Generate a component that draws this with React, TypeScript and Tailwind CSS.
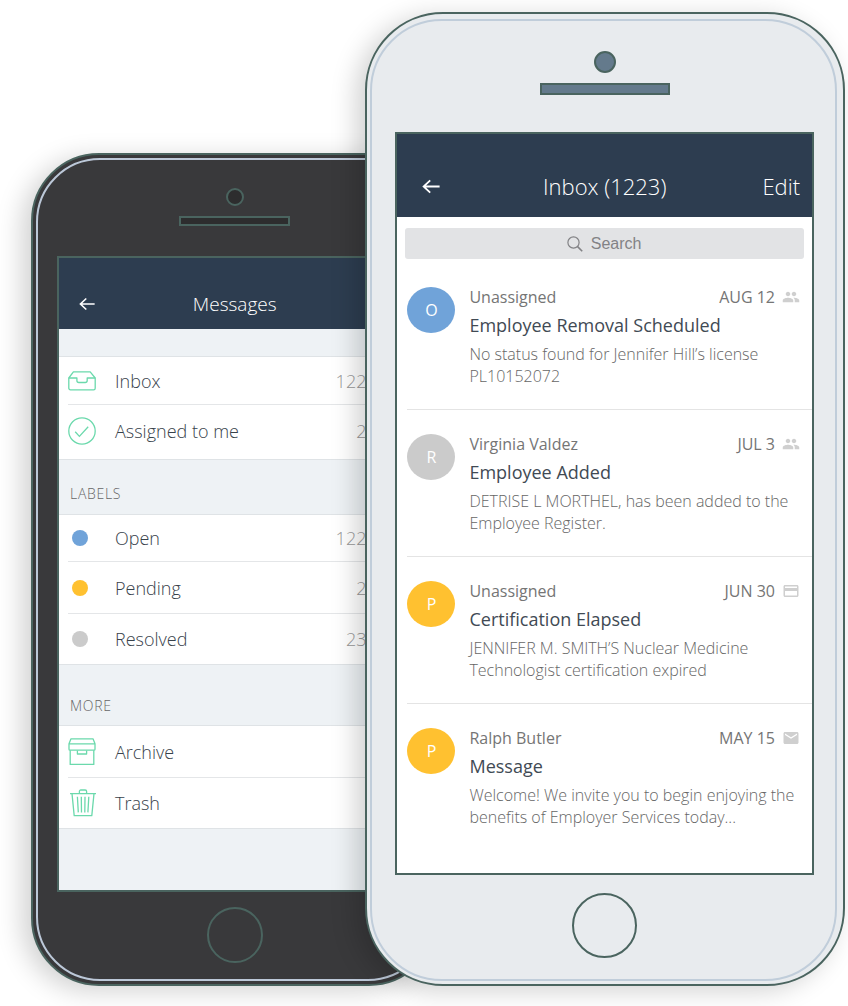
import type { ReactNode } from 'react';
import { MdCreditCard, MdEmail, MdPeople } from 'react-icons/md';

function BackArrow({ className }: { className: string }) {
  return (
    <svg viewBox="0 0 18 14" className={className} fill="none" stroke="currentColor" strokeWidth="1.8">
      <path d="M8.2 0.8 1.6 7l6.6 6.2M1.6 7H17.6" />
    </svg>
  );
}

function TrayIcon() {
  return (
    <svg viewBox="0 0 28 20" className="h-5 w-7" fill="none" stroke="currentColor" strokeWidth="1.3" strokeLinejoin="round">
      <path d="M0.8 7 5.4 0.9h16.8L27.2 7v10.2a1.6 1.6 0 0 1-1.6 1.6H2.4a1.6 1.6 0 0 1-1.6-1.6z" />
      <path d="M0.8 7h8.1v2.5a2 2 0 0 0 2 2h6.3a2 2 0 0 0 2-2V7h8" />
    </svg>
  );
}

function CheckCircleIcon() {
  return (
    <svg viewBox="0 0 28 28" className="size-7" fill="none" stroke="currentColor" strokeWidth="1.3">
      <circle cx="14" cy="14" r="13.2" />
      <path d="m7.2 14.8 4.2 4.6 8.8-9.6" />
    </svg>
  );
}

function ArchiveIcon() {
  return (
    <svg viewBox="0 0 28 28" className="size-7" fill="none" stroke="currentColor" strokeWidth="1.3" strokeLinejoin="round">
      <path d="M3 0.8h22l2 5v5.4a1 1 0 0 1-1 1H2a1 1 0 0 1-1-1V5.8zM1.2 5.8h25.6" />
      <path d="M2.2 12.2v14.2h23.6V12.2M9.4 12.4v3.6h9.2v-3.6" />
    </svg>
  );
}

function TrashIcon() {
  return (
    <svg viewBox="0 0 28 28" className="size-7" fill="none" stroke="currentColor" strokeWidth="1.3" strokeLinejoin="round">
      <path d="M2 4.6h26M4 4.6l2.2 22h17.6l2.2-22M11.4 4.4V2.4a1.400 1.400 0 0 1 1.400-1.400h4.400a1.400 1.400 0 0 1 1.400 1.400v2" />
      <path d="m9.4 7.8.9 15.6M13.3 7.8l.2 15.6M17 7.8l-.2 15.6M20.8 7.8l-.9 15.6" />
    </svg>
  );
}

function Dot({ className }: { className: string }) {
  return <span className={`ml-1 size-4 rounded-full ${className}`} />;
}

function MenuRow({ icon, label, count, className }: { icon: ReactNode; label: string; count?: string; className: string }) {
  return (
    <li className="group pl-[9px]">
      <a href="#" className={`flex items-center border-[#e4e6e8] pr-11 group-[:not(:last-child)]:border-b ${className}`}>
        <span className="flex w-[47px] shrink-0 text-[#6bd9ac]">{icon}</span>
        <span className="grow text-lg leading-6 font-light text-[#38424b]">{label}</span>
        {count && <span className="text-lg leading-6 font-light text-[#999]">{count}</span>}
      </a>
    </li>
  );
}

function Menu({ children }: { children: ReactNode }) {
  return <ul className="border-y border-[#dfe3e6] bg-white">{children}</ul>;
}

function SectionTitle({ children }: { children: ReactNode }) {
  return <h2 className="px-[11px] text-sm leading-5 font-light tracking-wider text-[#666]">{children}</h2>;
}

function MessagesPhone() {
  return (
    <section
      aria-label="Messages"
      className="min-w-0 flex-[407] rounded-[68px] border-2 border-[#4a645f] bg-[#39393b] p-[3px] shadow-[-9px_5px_26px_rgba(0,0,0,0.18)]"
    >
      <div className="rounded-[64px] border-2 border-[#bcc8d8] pt-7 pr-[18px] pb-4 pl-[19px]">
        <div className="flex flex-col items-center">
          <span className="size-[18px] rounded-full border-2 border-[#4a645f] bg-[#2d2d2e]" />
          <span className="mt-[10px] h-[10px] w-[111px] border-2 border-[#4a645f] bg-[#2d2d2e]" />
        </div>
        <div className="mt-[30px] border-2 border-[#4a645f] bg-[#eef2f5]">
          <header className="grid grid-cols-[1fr_auto_1fr] items-center bg-[#2d3d50] px-5 pt-8 pb-[11px] text-white">
            <button type="button" aria-label="Back" className="justify-self-start">
              <BackArrow className="h-[14px] w-4" />
            </button>
            <h1 className="text-[19px] leading-7 font-light">Messages</h1>
          </header>
          <nav className="pt-[27px] pb-[61px]">
            <Menu>
              <MenuRow icon={<TrayIcon />} label="Inbox" count="122" className="h-12" />
              <MenuRow icon={<CheckCircleIcon />} label="Assigned to me" count="2" className="h-[54px] pb-[2px]" />
            </Menu>
            <div className="pt-6 pb-[10px]">
              <SectionTitle>LABELS</SectionTitle>
            </div>
            <Menu>
              <MenuRow icon={<Dot className="bg-[#70a3d9]" />} label="Open" count="122" className="h-[47px]" />
              <MenuRow icon={<Dot className="bg-[#ffc130]" />} label="Pending" count="2" className="h-[52px]" />
              <MenuRow icon={<Dot className="bg-[#cbcbcb]" />} label="Resolved" count="23" className="h-[50px]" />
            </Menu>
            <div className="pt-[31px] pb-[9px]">
              <SectionTitle>MORE</SectionTitle>
            </div>
            <Menu>
              <MenuRow icon={<ArchiveIcon />} label="Archive" className="h-[52px]" />
              <MenuRow icon={<TrashIcon />} label="Trash" className="h-[50px]" />
            </Menu>
          </nav>
        </div>
        <button type="button" aria-label="Home" className="mx-auto mt-[15px] block size-14 rounded-full border-2 border-[#4a645f]" />
      </div>
    </section>
  );
}

const messages = [
  {
    initial: 'O',
    color: 'bg-[#70a3d9]',
    from: 'Unassigned',
    date: 'AUG 12',
    Icon: MdPeople,
    title: 'Employee Removal Scheduled',
    body: 'No status found for Jennifer Hill’s license PL10152072',
  },
  {
    initial: 'R',
    color: 'bg-[#cbcbcb]',
    from: 'Virginia Valdez',
    date: 'JUL 3',
    Icon: MdPeople,
    title: 'Employee Added',
    body: 'DETRISE L MORTHEL, has been added to the Employee Register.',
  },
  {
    initial: 'P',
    color: 'bg-[#ffc130]',
    from: 'Unassigned',
    date: 'JUN 30',
    Icon: MdCreditCard,
    title: 'Certification Elapsed',
    body: 'JENNIFER M. SMITH’S Nuclear Medicine Technologist certification expired',
  },
  {
    initial: 'P',
    color: 'bg-[#ffc130]',
    from: 'Ralph Butler',
    date: 'MAY 15',
    Icon: MdEmail,
    title: 'Message',
    body: 'Welcome! We invite you to begin enjoying the benefits of Employer Services today...',
  },
];

function InboxPhone() {
  return (
    <section
      aria-label="Inbox"
      className="relative -ml-[72px] min-w-0 flex-[479] rounded-[78px] border-2 border-[#4a645f] bg-[#e8ebee] pt-[5px] pr-[6px] pb-[3px] pl-[3px] shadow-[-9px_5px_26px_rgba(0,0,0,0.18)]"
    >
      <div className="rounded-[72px] border-2 border-[#c0cdda] pt-[30px] pr-[21px] pb-[21px] pl-[23px]">
        <div className="flex flex-col items-center">
          <span className="size-[22px] rounded-full border-2 border-[#4a645f] bg-[#647a8c]" />
          <span className="mt-[10px] h-3 w-[130px] border-2 border-[#4a645f] bg-[#647a8c]" />
        </div>
        <div className="mt-[37px] border-2 border-[#4a645f] bg-white">
          <header className="grid grid-cols-[1fr_auto_1fr] items-center bg-[#2d3d50] px-3 pt-9 pb-[15px] text-white">
            <button type="button" aria-label="Back" className="ml-[13px] justify-self-start">
              <BackArrow className="h-[15px] w-[18px]" />
            </button>
            <h1 className="text-[22px] leading-8 font-light">Inbox (1223)</h1>
            <button type="button" className="justify-self-end text-[22px] leading-8 font-light">
              Edit
            </button>
          </header>
          <div className="px-2 pt-[11px]">
            <label className="flex h-[31px] items-center justify-center gap-2 rounded-[3px] bg-[#e2e3e5] text-[#828285]">
              <svg viewBox="0 0 16 16" className="size-4" fill="none" stroke="currentColor" strokeWidth="1.2">
                <circle cx="6.5" cy="6.5" r="5.6" />
                <path d="m10.6 10.6 4.6 4.6" strokeWidth="1.6" />
              </svg>
              <input
                type="text"
                aria-label="Search"
                placeholder="Search"
                className="w-[52px] bg-transparent font-['Liberation_Sans',Arial,sans-serif] text-base leading-5 outline-none placeholder:text-[#828285]"
              />
            </label>
          </div>
          <ul className="pt-1 pb-[23px] pl-[10px]">
            {messages.map(({ initial, color, from, date, Icon, title, body }) => (
              <li key={title} className="flex gap-[14px] border-b border-[#e4e4e4] pt-6 pr-3 pb-[22px] last:border-b-0">
                <span className={`flex h-[46px] w-12 shrink-0 items-center justify-center rounded-[50%] text-base text-white ${color}`}>
                  {initial}
                </span>
                <div className="min-w-0 grow">
                  <div className="flex h-5 items-center text-base leading-5 text-[#757575]">
                    <span className="grow">{from}</span>
                    <time>{date}</time>
                    <Icon className="ml-[7px] size-[18px] text-[#cfcfcf]" />
                  </div>
                  <h2 className="mt-1 text-lg leading-7 font-medium text-[#414a54]">
                    <a href="#">{title}</a>
                  </h2>
                  <p className="mt-1 text-base leading-[22px] font-light text-[#666]">{body}</p>
                </div>
              </li>
            ))}
          </ul>
        </div>
        <button type="button" aria-label="Home" className="mx-auto mt-[18px] block size-[65px] rounded-full border-2 border-[#4a645f]" />
      </div>
    </section>
  );
}

export default function App() {
  return (
    <main className="flex min-h-screen items-end overflow-hidden bg-white pt-3 pr-[3px] pb-5 pl-[31px] font-['Open_Sans','Noto_Sans',sans-serif]">
      <MessagesPhone />
      <InboxPhone />
    </main>
  );
}
